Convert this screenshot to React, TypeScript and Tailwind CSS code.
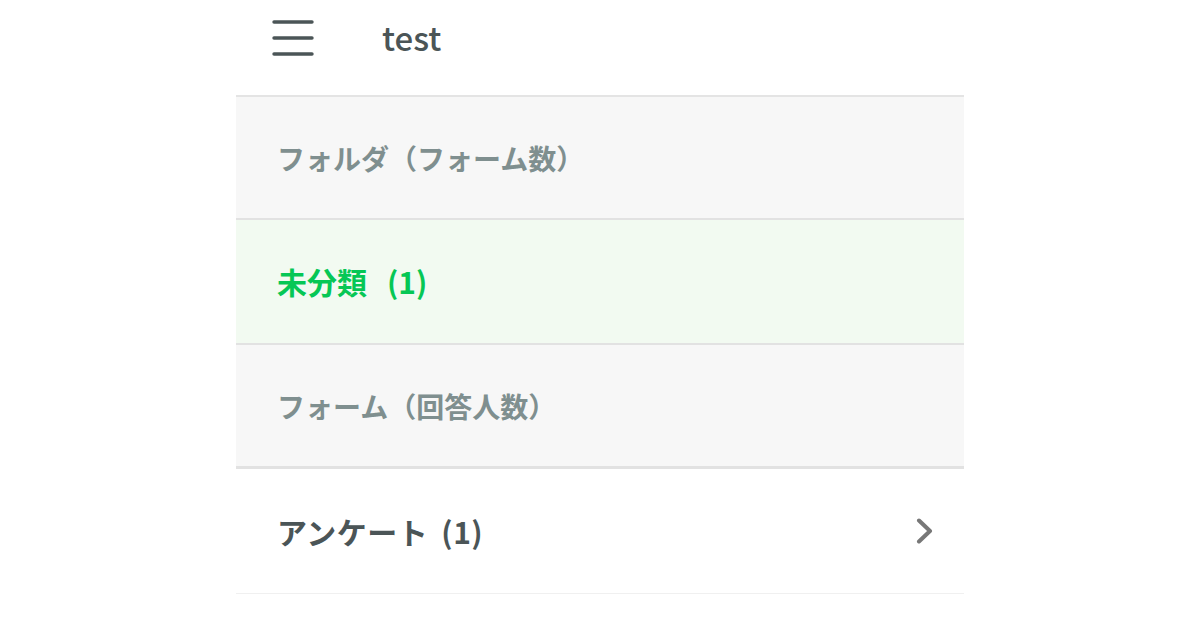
const font = { fontFamily: '"Noto Sans CJK JP", "Noto Sans", sans-serif' };

const SectionLabel = ({ text }: { text: string }) => (
    <div className="h-[123px] flex items-center px-[41px] bg-[#f7f7f7] border-b-2 border-[#e2e2e2]">
        <span className="text-[28px] font-bold text-[#7f8f8f]">{text}</span>
    </div>
);

export default function App() {
    return (
        <div className="w-[1200px] h-[630px] bg-white overflow-hidden" style={font}>
            <div className="w-[728px] mx-auto">
                <header className="h-[97px] flex items-start border-b-2 border-[#e4e4e4]">
                    <svg className="ml-[36px] mt-[20px]" width="42" height="36" viewBox="0 0 42 36">
                        <g stroke="#4b5557" strokeWidth="3.4" strokeLinecap="round">
                            <line x1="2" y1="2" x2="40" y2="2" />
                            <line x1="2" y1="18" x2="40" y2="18" />
                            <line x1="2" y1="34" x2="40" y2="34" />
                        </g>
                    </svg>
                    <h1 className="ml-[68px] mt-[17px] text-[33px] leading-[40px] font-medium text-[#4b5557]">test</h1>
                </header>

                <SectionLabel text="フォルダ（フォーム数）" />

                <div className="h-[125px] flex items-center px-[41px] bg-[#f2faf1] border-b-2 border-[#e2e2e2]">
                    <span className="text-[30px] font-bold text-[#06c755]">
                        未分類<span className="ml-[20px]">(1)</span>
                    </span>
                </div>

                <SectionLabel text="フォーム（回答人数）" />

                <div className="h-[126px] flex items-center justify-between pl-[41px] pr-[30px] border-t border-[#e2e2e2] border-b border-b-[#f0f0f0]">
                    <span className="text-[30px] font-bold tracking-[0.5px] text-[#4b5557]">
                        アンケート<span className="ml-[13px]">(1)</span>
                    </span>
                    <svg width="18" height="26" viewBox="0 0 18 26">
                        <polyline
                            points="3,2.5 14,13 3,23.5"
                            fill="none"
                            stroke="#777777"
                            strokeWidth="4"
                            strokeLinecap="round"
                            strokeLinejoin="round"
                        />
                    </svg>
                </div>
            </div>
        </div>
    );
}
